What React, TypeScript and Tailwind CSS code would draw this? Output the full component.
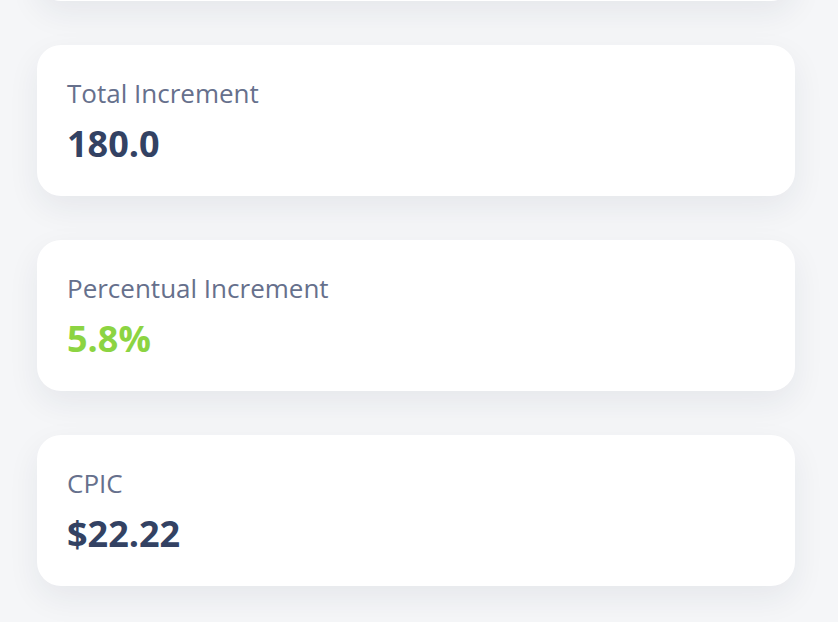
import React from 'react';

type Stat = { label: string; value: string; tone?: 'green' };

const stats: Stat[] = [
  { label: 'Total Increment', value: '180.0' },
  { label: 'Percentual Increment', value: '5.8%', tone: 'green' },
  { label: 'CPIC', value: '$22.22' },
];

const StatCard: React.FC<{ stat: Stat }> = ({ stat }) => (
  <div className="h-[151px] rounded-[24px] bg-white px-[30px] pt-[31px] shadow-[0_12px_32px_rgba(30,40,70,0.07)]">
    <p className="text-[26px] leading-[34px] text-[#66708c]">{stat.label}</p>
    <p
      className={`mt-[12px] text-[36px] font-bold leading-[44px] ${
        stat.tone === 'green' ? 'text-[#8cd442]' : 'text-[#334263]'
      }`}
    >
      {stat.value}
    </p>
  </div>
);

export default function App() {
  return (
    <div
      className="h-[622px] w-[838px] overflow-hidden bg-[#f5f6f8] pl-[37px]"
      style={{ fontFamily: '"Open Sans", "Noto Sans", sans-serif' }}
    >
      <div className="-mt-[150px] flex w-[758px] flex-col gap-[44px]">
        <div className="h-[151px] rounded-[24px] bg-white shadow-[0_12px_32px_rgba(30,40,70,0.07)]" />
        {stats.map(s => (
          <StatCard key={s.label} stat={s} />
        ))}
      </div>
    </div>
  );
}
